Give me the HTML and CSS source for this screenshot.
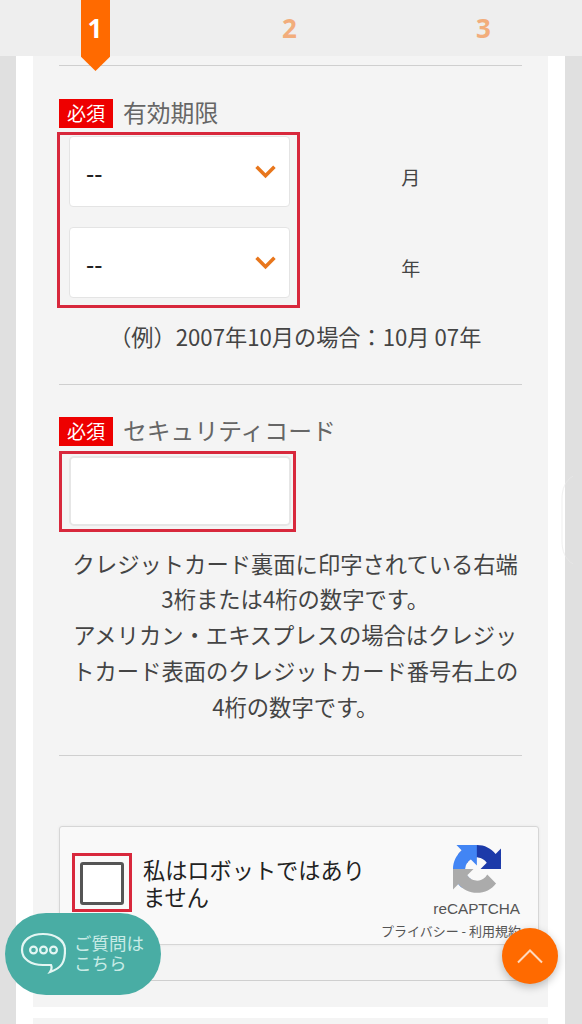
FILE: index.html
```html
<!DOCTYPE html>
<html lang="ja">
<head>
	<meta charset="UTF-8">
	<meta name="viewport" content="width=device-width, initial-scale=1.0">
	<title>お支払い情報の入力</title>
	<link rel="stylesheet" href="styles.css">
</head>

<body>
	<header class="steps">
		<span class="step step_on">1</span>
		<span class="step">2</span>
		<span class="step">3</span>
	</header>
	<main>
		<div class="panel">
			<hr class="rule">
			<section class="field field_expiry">
				<h2 class="label"><span class="badge">必須</span>有効期限</h2>
				<div class="expiry">
					<div class="error_box selects">
						<div class="select">--<svg class="chevron" viewBox="0 0 20 14"><path d="M1.5 2.5l8.5 8.5 8.5-8.5"/></svg></div>
						<div class="select">--<svg class="chevron" viewBox="0 0 20 14"><path d="M1.5 2.5l8.5 8.5 8.5-8.5"/></svg></div>
					</div>
					<div class="units">
						<div class="unit">月</div>
						<div class="unit">年</div>
					</div>
				</div>
				<p class="note note_example">（例）2007年10月の場合：10月 07年</p>
			</section>
			<hr class="rule">
			<section class="field field_code">
				<h2 class="label"><span class="badge">必須</span>セキュリティコード</h2>
				<div class="error_box code_box">
					<div class="code_input"></div>
				</div>
				<p class="note note_code">クレジットカード裏面に印字されている右端<br>3桁または4桁の数字です。<br>アメリカン・エキスプレスの場合はクレジットカード表面のクレジットカード番号右上の<br>4桁の数字です。</p>
			</section>
			<hr class="rule">
			<div class="captcha">
				<div class="captcha_check"><span class="captcha_tick"></span></div>
				<div class="captcha_text">私はロボットではありません</div>
				<div class="captcha_brand">
					<svg class="captcha_logo" viewBox="0 0 64 64">
						<path d="M64 31.955l-.033-1.37V4.687l-7.16 7.16C50.948 4.674 42.033.093 32.05.093c-10.4 0-19.622 4.96-25.458 12.64l11.736 11.86a15.55 15.55 0 0 1 4.754-5.334c2.05-1.6 4.952-2.906 8.968-2.906.485 0 .86.057 1.135.163 4.976.393 9.288 3.14 11.828 7.124l-8.307 8.307c10.522-.04 22.4-.066 27.295.006" fill="#1c3aa9"/>
						<path d="M31.862.001l-1.37.033H4.593l7.16 7.16C4.58 13.053-.001 21.968-.001 31.95c0 10.4 4.96 19.622 12.64 25.458l11.86-11.736a15.55 15.55 0 0 1-5.334-4.754c-1.6-2.05-2.906-4.952-2.906-8.968 0-.485.057-.86.163-1.135.393-4.976 3.14-9.288 7.124-11.828l8.307 8.307c-.04-10.522-.066-22.4.006-27.295" fill="#4285f4"/>
						<path d="M.001 31.95l.033 1.37v25.898l7.16-7.16c5.86 7.173 14.775 11.754 24.757 11.754 10.4 0 19.622-4.96 25.458-12.64l-11.736-11.86a15.55 15.55 0 0 1-4.754 5.334c-2.05 1.6-4.952 2.906-8.968 2.906-.485 0-.86-.057-1.135-.163-4.976-.393-9.288-3.14-11.828-7.124l8.307-8.307c-10.522.04-22.4.066-27.295-.006" fill="#ababab"/>
					</svg>
					<div class="captcha_name">reCAPTCHA</div>
					<div class="captcha_links">プライバシー - 利用規約</div>
				</div>
			</div>
			<hr class="rule rule_last">
		</div>
		<div class="panel panel_next"></div>
	</main>
	<svg class="edge_swipe" viewBox="0 0 20 90"><path d="M13 1C5 6 2 14 2 24v42c0 10 3 18 11 23"/></svg>
	<a class="help_btn" href="#">
		<svg class="help_icon" viewBox="0 0 46 42">
			<path d="M23 2C11 2 2 8 2 18c0 9 9 15 21 15 3 0 5 0 8 0 1 2 1 4-1 7 6-2 10-5 12-8 2-3 3-8 3-14C45 8 35 2 23 2z"/>
			<circle cx="13.5" cy="18" r="3.4"/>
			<circle cx="23.5" cy="18" r="3.4"/>
			<circle cx="33.5" cy="18" r="3.4"/>
		</svg>
		<span class="help_text">ご質問は<br>こちら</span>
	</a>
	<a class="top_btn" href="#">
		<svg class="top_icon" viewBox="0 0 28 16"><path d="M2 14.5L14 2.5l12 12"/></svg>
	</a>
</body>

</html>
```

FILE: styles.css
```css
html, body {height: 100%;}

body {
	margin: 0;
	height: 1024px;
	overflow: hidden;
	position: relative;
	background-color: #e0e0e0;
	color: #333;
	font-family: "Noto Sans CJK JP", "Noto Sans", sans-serif;
}

/* steps */
.steps {
	display: flex;
	justify-content: space-between;
	height: 56px;
	padding: 0 84px 0 81px;
	background-color: #eee;
	font-family: "Noto Sans", sans-serif;
	font-weight: 700;
	font-size: 26px;
	color: #f2ad7c;
}
.step {position: relative; width: 29px; line-height: 57px; text-align: center;}
.step_on {z-index: 2; padding-right: 1px; box-sizing: border-box; color: #fff;}
.step_on::before {
	content: "";
	position: absolute;
	z-index: -1;
	top: 0;
	left: 0;
	width: 29px;
	height: 71px;
	background-color: #ff6a00;
	clip-path: polygon(0 0, 100% 0, 100% 80%, 50% 100%, 0 80%);
}

/* column */
main {margin: 0 17px 0 16px; padding: 0 17.5px 0 17px; background-color: #fff;}
.panel {padding: 9px 26px 26px 26px; background-color: #f4f4f4;}
.panel_next {height: 40px; margin-top: 11px; padding: 0;}
.rule {height: 1px; margin: 0; border: 0; background-color: #cfcfcf;}
.rule_last {margin-top: 35px;}

/* fields */
.field_expiry {padding: 33px 0 29px;}
.field_code {padding: 32px 0 31px;}
.label {display: flex; align-items: flex-start; margin: 0; font-weight: 400; font-size: 23.8px; line-height: 25px; color: #666;}
.badge {
	box-sizing: border-box;
	width: 54px;
	height: 29px;
	margin-right: 10px;
	background-color: #ee0000;
	color: #fff;
	font-size: 19px;
	line-height: 27px;
	text-align: center;
}
.error_box {box-sizing: border-box; border: 3px solid #d8283c;}

.expiry {display: flex; margin: 4px 0 0 -2px;}
.selects {display: flex; flex-direction: column; gap: 20px; width: 243px; height: 176px; padding: 1px 7px 1px 9px;}
.select {
	display: flex;
	justify-content: space-between;
	align-items: center;
	box-sizing: border-box;
	height: 71px;
	padding: 2px 13px 0 16px;
	border: 1px solid #e4e4e4;
	border-radius: 4px;
	background-color: #fff;
	color: #222;
	font-size: 23px;
	font-weight: 500;
	line-height: 1;
}
.chevron {width: 21px; height: 15px; margin-top: -2px; fill: none; stroke: #e8761c; stroke-width: 3.4;}
.units {display: flex; flex-direction: column; gap: 21px; flex: 1; padding-top: 10px;}
.unit {height: 70px; line-height: 70px; text-align: center; font-size: 19px; color: #444;}

.note {margin: 0; padding-left: 10px; text-align: center; color: #444; font-size: 22.3px; line-height: 35.7px;}
.note_example {margin-top: 11px; font-size: 22.2px;}
.note_code {margin-top: 14px;}

.code_box {width: 237px; height: 81px; margin-top: 5px; padding: 2px 4px 3px 7px;}
.code_input {height: 100%; box-sizing: border-box; width: 222px; border: 2px solid #e6e6e6; border-radius: 5px; background-color: #fff;}

/* captcha */
.captcha {
	display: flex;
	box-sizing: border-box;
	width: 480px;
	height: 119px;
	margin-top: 70px;
	border: 1px solid #d6d6d6;
	border-radius: 3px;
	background-color: #f9f9f9;
	box-shadow: 0 0 3px rgba(0, 0, 0, 0.06);
}
.captcha_check {
	box-sizing: border-box;
	width: 60px;
	height: 59px;
	margin: 26px 0 0 12px;
	padding: 5.5px 4.5px;
	border: 3px solid #d8283c;
}
.captcha_tick {display: block; box-sizing: border-box; width: 44px; height: 43px; border: 3px solid #555; border-radius: 3px; background-color: #fff;}
.captcha_text {width: 226px; margin: 29px 0 0 11px; color: #222; font-size: 22.2px; line-height: 27px;}
.captcha_brand {flex: 1; display: flex; flex-direction: column; align-items: flex-end; padding: 18px 17px 0 0; color: #555;}
.captcha_logo {width: 48px; height: 48px; margin-right: 20px;}
.captcha_name {margin: 7px 1px 0 0; font-family: "Liberation Sans", sans-serif; font-size: 15.3px; line-height: 18px;}
.captcha_links {margin-top: 4px; white-space: nowrap; font-size: 13px; line-height: 18px;}

/* floating */
.edge_swipe {position: absolute; top: 475px; left: 560px; width: 20px; height: 90px; fill: none; stroke: #ebebeb; stroke-width: 1; opacity: 0.7;}

.help_btn {
	position: absolute;
	top: 913px;
	left: 5px;
	display: flex;
	align-items: center;
	gap: 8px;
	box-sizing: border-box;
	width: 156px;
	height: 82px;
	padding: 0 0 2px 15px;
	border-radius: 41px;
	background-color: #49ada4;
	color: #c8ebe6;
	font-size: 17.5px;
	line-height: 20px;
	text-decoration: none;
}
.help_icon {width: 46px; height: 42px; flex: none; fill: none; stroke: #e4f6f3; stroke-width: 2.2;}

.top_btn {
	position: absolute;
	top: 928px;
	left: 502px;
	display: flex;
	align-items: center;
	justify-content: center;
	width: 56px;
	height: 56px;
	border-radius: 50%;
	background-color: #ff6a00;
	box-shadow: 0 3px 8px rgba(0, 0, 0, 0.25);
}
.top_icon {width: 28px; height: 16px; fill: none; stroke: #ffd9bd; stroke-width: 2;}
```
